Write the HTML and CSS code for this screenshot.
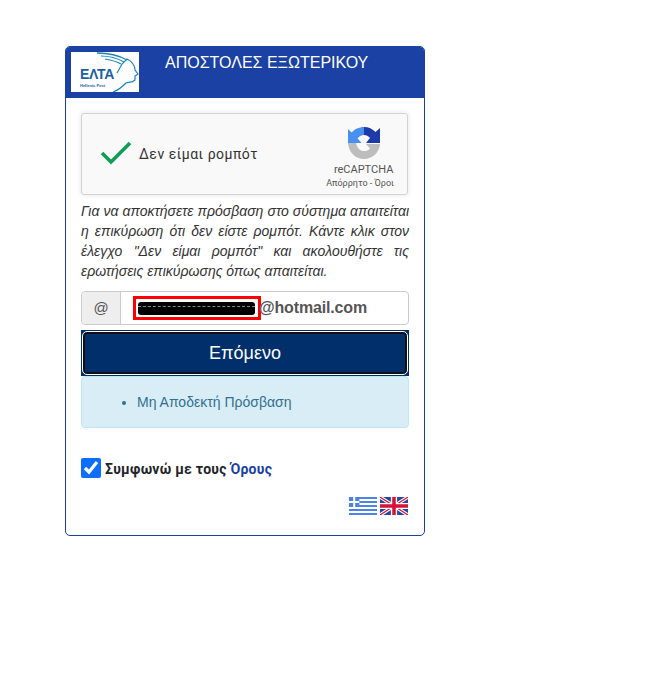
FILE: index.html
```html
<!DOCTYPE html>
<html lang="el">
<head>
  <meta charset="UTF-8" />
  <title>ΑΠΟΣΤΟΛΕΣ ΕΞΩΤΕΡΙΚΟΥ</title>
  <link rel="stylesheet" href="styles.css">
</head>
<body>
  <div class="card">
    <header class="card-header">
      <div class="logo">
        <span class="logo-name">ΕΛΤΑ</span>
        <span class="logo-sub">Hellenic Post</span>
        <svg class="logo-bird" viewBox="0 0 68 40" fill="none" stroke="#1b86b8">
          <path d="M26 1 C36 1 47 3 56 8" stroke-width="1.4"/>
          <path d="M30 4 C38 4 46 6 53 10" stroke-width="1.2"/>
          <path d="M34 7 C40 8 45 9 50 12" stroke-width="1.1"/>
          <path d="M46 21 L51 12 L56 7 C61 9 64 14 64 18 L67 22 L64 24 L64 28 C61 31 58 30 55 31 C52 34 48 38 42 40" stroke-width="1.2"/>
        </svg>
      </div>
      <h1 class="card-title">ΑΠΟΣΤΟΛΕΣ ΕΞΩΤΕΡΙΚΟΥ</h1>
    </header>

    <div class="card-body">
      <div class="captcha">
        <svg class="captcha-check" viewBox="0 0 32 26" fill="none">
          <path d="M2 13 L11 22 L30 3" stroke="#0f9d58" stroke-width="3.6"/>
        </svg>
        <span class="captcha-label">Δεν είμαι ρομπότ</span>
        <div class="captcha-brand">
          <svg class="captcha-logo" viewBox="0 0 32 32">
            <path d="M16 0 L16 8 C13.5 8 11 9.3 9.6 11.4 L13.6 16 L0 16 L0 2 L3.6 5.6 C6.5 2.2 11 0 16 0 Z" fill="#4a90f0"/>
            <path d="M16 0 C20.5 0 24.6 1.9 27.5 5 L32 1 L32 16 L18 16 L22 11 C20.5 9.2 18.4 8 16 8 Z" fill="#1c3aa9"/>
            <path d="M0 16 L8.2 16 C9 21.6 12.2 24 16 24 C18.4 24 20.4 23.2 22 21.4 L18 17 L32 17 C31.4 25.5 24.4 32 16 32 C7.6 32 0.6 25.5 0 16 Z" fill="#bdbdbd"/>
          </svg>
          <span class="captcha-name">reCAPTCHA</span>
          <span class="captcha-links">Απόρρητο - Όροι</span>
        </div>
      </div>

      <p class="intro">Για να αποκτήσετε πρόσβαση στο σύστημα απαιτείται η επικύρωση ότι δεν είστε ρομπότ. Κάντε κλικ στον έλεγχο "Δεν είμαι ρομπότ" και ακολουθήστε τις ερωτήσεις επικύρωσης όπως απαιτείται.</p>

      <div class="input-group">
        <span class="input-addon">@</span>
        <div class="input-value">
          <span class="redacted"><span class="redacted-bar"></span></span>@hotmail.com
        </div>
      </div>

      <div class="next-wrap">
        <button class="next-btn" type="button">Επόμενο</button>
      </div>

      <div class="alert">
        <ul>
          <li>Μη Αποδεκτή Πρόσβαση</li>
        </ul>
      </div>

      <label class="terms">
        <input type="checkbox" checked>
        <span>Συμφωνώ με τους <a href="#">Όρους</a></span>
      </label>

      <div class="flags">
        <svg class="flag" viewBox="0 0 27 18" preserveAspectRatio="none">
          <rect width="27" height="18" fill="#fff"/>
          <g fill="#4d82e8">
            <rect y="0" width="27" height="2"/>
            <rect y="4" width="27" height="2"/>
            <rect y="8" width="27" height="2"/>
            <rect y="12" width="27" height="2"/>
            <rect y="16" width="27" height="2"/>
            <rect width="10" height="10"/>
          </g>
          <rect x="4" width="2" height="10" fill="#fff"/>
          <rect y="4" width="10" height="2" fill="#fff"/>
        </svg>
        <svg class="flag" viewBox="0 0 27 18" preserveAspectRatio="none">
          <rect width="27" height="18" fill="#26479e"/>
          <path d="M0 0 L27 18 M27 0 L0 18" stroke="#fff" stroke-width="3.4"/>
          <path d="M0 0 L27 18 M27 0 L0 18" stroke="#d8103a" stroke-width="1.2"/>
          <path d="M13.5 0 V18 M0 9 H27" stroke="#fff" stroke-width="6"/>
          <path d="M13.5 0 V18 M0 9 H27" stroke="#d8103a" stroke-width="3.4"/>
        </svg>
      </div>
    </div>
  </div>
</body>
</html>
```

FILE: styles.css
```css
* {
  box-sizing: border-box;
}
body {
  margin: 0;
  padding: 46px 0 0 65px;
  background-color: #fff;
  font-family: 'Liberation Sans', Arial, sans-serif;
  font-size: 14px;
  color: #333;
}
.card {
  width: 360px;
  height: 490px;
  border: 1px solid #1a41a3;
  border-radius: 5px;
  overflow: hidden;
}
/* Header */
.card-header {
  display: flex;
  height: 51px;
  padding: 5px 5px 0;
  background-color: #1a41a3;
}
.logo {
  position: relative;
  flex: none;
  width: 68px;
  height: 40px;
  background-color: #fff;
}
.logo-name {
  position: absolute;
  left: 9px;
  top: 14px;
  font-size: 14px;
  font-weight: 700;
  line-height: 16px;
  letter-spacing: -0.3px;
  color: #1b5fa0;
}
.logo-sub {
  position: absolute;
  left: 9px;
  top: 31px;
  font-size: 4px;
  font-weight: 700;
  line-height: 5px;
  color: #1b5fa0;
}
.logo-bird {
  position: absolute;
  inset: 0;
  width: 68px;
  height: 40px;
}
.card-title {
  margin: 1px 0 0 26px;
  font-size: 16px;
  font-weight: 400;
  line-height: 20px;
  color: #fff;
  white-space: nowrap;
}
.card-body {
  padding: 15px 15px 0;
}
/* reCAPTCHA */
.captcha {
  display: flex;
  align-items: center;
  width: 327px;
  height: 82px;
  padding: 0 14px 0 18px;
  background-color: #f9f9f9;
  border: 1px solid #d3d3d3;
  border-radius: 3px;
  box-shadow: 0 0 4px 1px rgba(0,0,0,0.08);
  font-family: Roboto, sans-serif;
}
.captcha-check {
  flex: none;
  width: 32px;
  height: 26px;
  margin-bottom: 3px;
}
.captcha-label {
  margin-left: 7px;
  font-size: 14px;
  letter-spacing: 0.5px;
  color: #333;
}
.captcha-brand {
  display: flex;
  flex-direction: column;
  align-items: center;
  margin-left: auto;
  margin-right: -1px;
  padding-top: 8px;
}
.captcha-logo {
  width: 32px;
  height: 32px;
  margin-left: 8px;
}
.captcha-name {
  margin-top: 4px;
  margin-left: 7px;
  font-size: 11px;
  line-height: 13px;
  color: #555;
}
.captcha-links {
  margin-top: 2px;
  font-size: 9px;
  line-height: 11px;
  color: #555;
}
.intro {
  margin: 6px 0 0;
  font-size: 14px;
  font-style: italic;
  line-height: 20px;
  text-align: justify;
  color: #333;
}
/* Email */
.input-group {
  display: flex;
  height: 34px;
  margin-top: 10px;
  border: 1px solid #ccc;
  border-radius: 4px;
}
.input-addon {
  flex: none;
  width: 39px;
  padding-top: 7px;
  background-color: #eee;
  border-right: 1px solid #ccc;
  border-radius: 3px 0 0 3px;
  font-size: 15px;
  line-height: 18px;
  text-align: center;
  color: #555;
}
.input-value {
  display: flex;
  align-items: center;
  padding-left: 12px;
  font-size: 16px;
  font-weight: 700;
  letter-spacing: -0.15px;
  color: #555;
}
.redacted {
  display: block;
  width: 128px;
  height: 24px;
  margin-right: -2px;
  padding: 3px 3px 0 2px;
  border: 3px solid #f00;
  background-color: #fff;
}
.redacted-bar {
  display: block;
  height: 13px;
  padding-top: 4px;
  background-color: #000;
  border-radius: 3px;
}
.redacted-bar::before {
  content: "";
  display: block;
  border-top: 1px dashed #888;
}
/* Button */
.next-wrap {
  margin-top: 5px;
  padding: 2px;
  background-color: #002f6c;
}
.next-btn {
  display: block;
  width: 100%;
  height: 42px;
  padding: 0;
  background-color: #002f6c;
  border: 2px solid #111;
  outline: 1px solid #fff;
  border-radius: 4px;
  font-family: inherit;
  font-size: 18px;
  color: #fff;
  cursor: pointer;
}
.alert {
  height: 52px;
  padding: 15px 0 0;
  background-color: #d9edf7;
  border: 1px solid #bce8f1;
  border-radius: 4px;
  color: #31708f;
}
.alert ul {
  margin: 0;
  padding-left: 55px;
  line-height: 20px;
}
/* Terms */
.terms {
  display: flex;
  align-items: center;
  gap: 4px;
  margin-top: 30px;
  font-family: Roboto, sans-serif;
  font-size: 14px;
  font-weight: 700;
  letter-spacing: 0.25px;
  color: #212529;
}
.terms span {
  padding-top: 2px;
}
.terms input {
  width: 20px;
  height: 20px;
  margin: 0;
  accent-color: #0d6efd;
}
.terms a {
  color: #1a41a3;
  text-decoration: none;
}
.flags {
  display: flex;
  justify-content: flex-end;
  gap: 3px;
  margin-top: 19px;
  padding-right: 1px;
}
.flag {
  width: 28px;
  height: 18px;
}
```
